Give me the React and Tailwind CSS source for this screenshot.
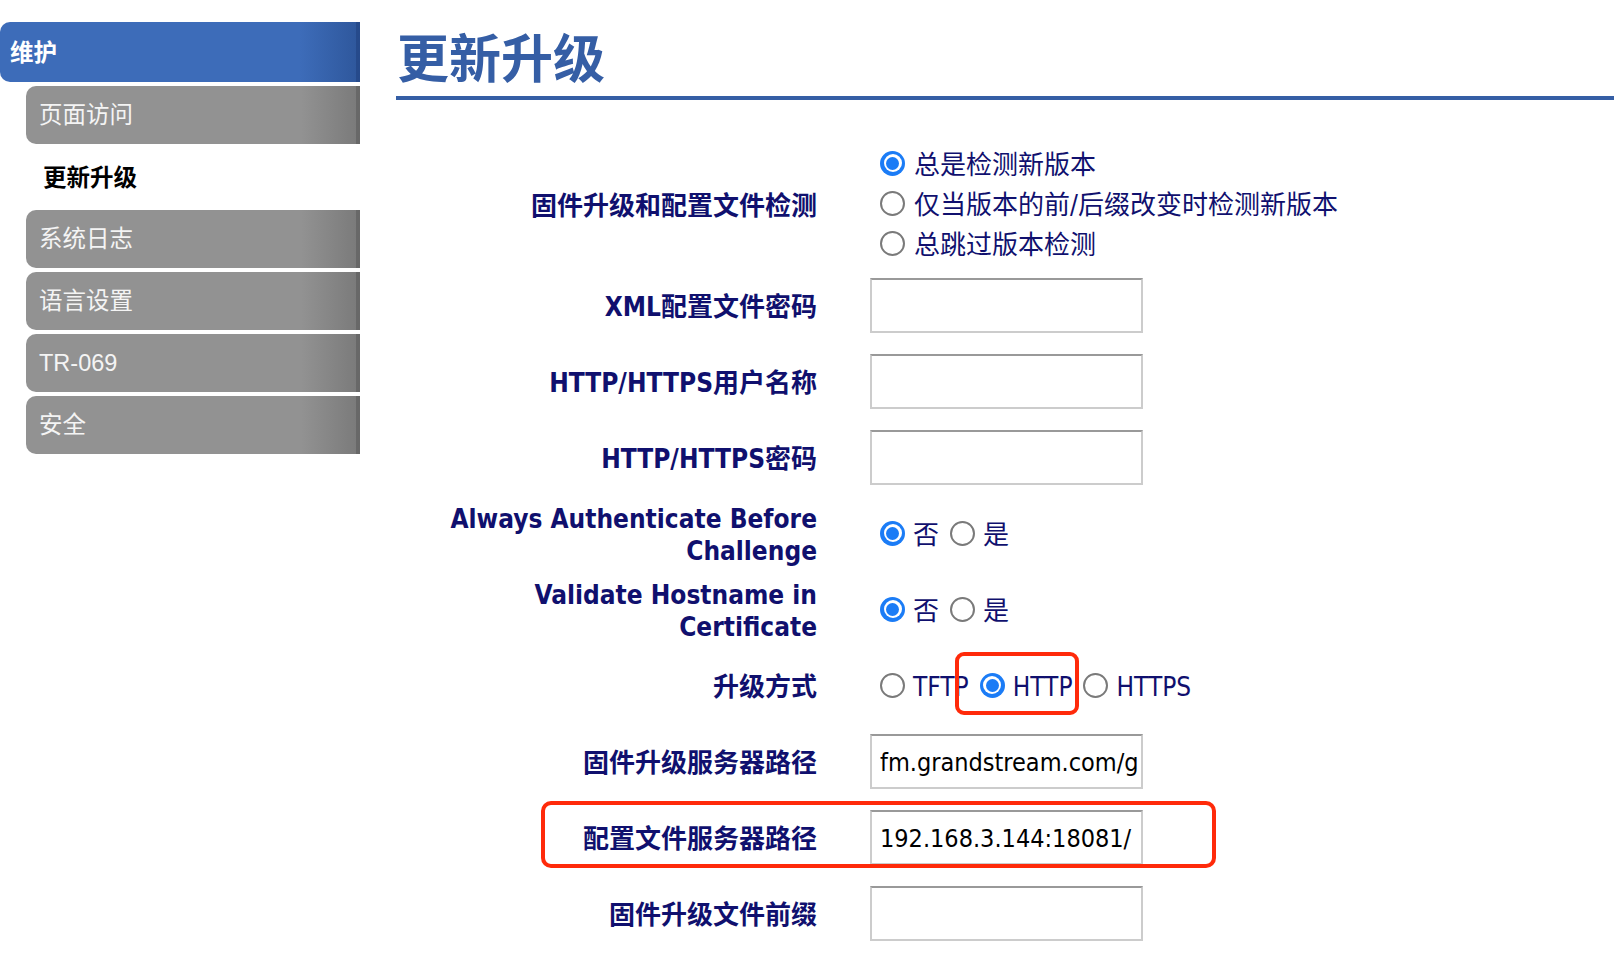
import React from 'react';

const navItems = [
  { label: '页面访问' },
  { label: '更新升级', active: true },
  { label: '系统日志' },
  { label: '语言设置' },
  { label: 'TR-069' },
  { label: '安全' },
];

function Radio({ checked }) {
  if (checked) {
    return (
      <span className="w-[25px] h-[25px] shrink-0 rounded-full bg-[#1b7cf6] flex items-center justify-center">
        <span className="w-[18px] h-[18px] rounded-full bg-white flex items-center justify-center">
          <span className="w-[13px] h-[13px] rounded-full bg-[#1b7cf6]" />
        </span>
      </span>
    );
  }
  return <span className="w-[25px] h-[25px] shrink-0 rounded-full border-2 border-[#7a7a7a] bg-white" />;
}

function Option({ checked, label }) {
  return (
    <span className="flex items-center">
      <Radio checked={checked} />
      <span className="ml-[8px] mr-[11px] pt-[4px]">{label}</span>
    </span>
  );
}

function Label({ children }) {
  return (
    <div className="h-[76px] pt-[3px] flex items-center justify-end text-right font-bold leading-[32px]">
      <span>{children}</span>
    </div>
  );
}

function TextField({ value }) {
  return (
    <div className="h-[76px] flex items-center">
      <input
        readOnly
        defaultValue={value}
        className="w-[273px] h-[55px] border-2 border-[#cccccc] border-t-[#999999] bg-white pl-[8px] pr-[3px] pt-[2px] text-[25px] text-black outline-none"
      />
    </div>
  );
}

function RadioRow({ options }) {
  return (
    <div className="h-[76px] flex items-center pl-[10px]">
      {options.map((o) => (
        <Option key={o.label} checked={o.checked} label={o.label} />
      ))}
    </div>
  );
}

export default function App() {
  return (
    <div className="relative w-[1614px] h-[962px] bg-white flex overflow-hidden font-['DejaVu_Sans_Condensed','DejaVu_Sans','Noto_Sans_CJK_SC',sans-serif]">
      {/* left menu */}
      <aside className="w-[360px] shrink-0 pt-[22px] flex flex-col gap-[4px] font-['Liberation_Sans','Noto_Sans_CJK_SC',sans-serif] text-[23.5px]">
        <div className="h-[60px] rounded-l-[10px] pl-[10px] pt-[3px] flex items-center font-bold text-white bg-[linear-gradient(90deg,#3d6cb9_0px,#3d6cb9_300px,#2f589d_356px,#264a8b_356px)]">
          维护
        </div>
        {navItems.map((item) =>
          item.active ? (
            <div key={item.label} className="ml-[26px] h-[58px] pl-[17px] pt-[3px] flex items-center font-bold text-black">
              {item.label}
            </div>
          ) : (
            <div
              key={item.label}
              className="ml-[26px] h-[58px] pl-[13px] pt-[2px] rounded-l-[10px] flex items-center text-[#f4f4f4] bg-[linear-gradient(90deg,#929292_0px,#929292_275px,#7b7b7b_330px,#686868_330px)]"
            >
              {item.label}
            </div>
          )
        )}
      </aside>

      {/* content */}
      <main className="ml-[36px] flex-1">
        <h1 className="mt-[30px] h-[54px] pl-[1px] text-[52px] leading-[52px] font-bold text-[#355ea5] font-['Noto_Sans_CJK_SC',sans-serif]">
          更新升级
        </h1>
        <div className="mt-[12px] h-[4px] bg-[#355ea5]" />

        <div className="mt-[41px] grid grid-cols-[421px_auto] gap-x-[53px] text-[26px] text-[#10106e]">
          <div className="h-[126px] pt-[4px] flex items-center justify-end font-bold">固件升级和配置文件检测</div>
          <div className="h-[126px] pt-[2px] pl-[10px] flex flex-col">
            {[
              ['总是检测新版本', true],
              ['仅当版本的前/后缀改变时检测新版本', false],
              ['总跳过版本检测', false],
            ].map(([t, c]) => (
              <div key={t} className="h-[40px] flex items-center">
                <Radio checked={c} />
                <span className="ml-[9px] pt-[5px]">{t}</span>
              </div>
            ))}
          </div>

          <Label>XML配置文件密码</Label>
          <TextField value="" />

          <Label>HTTP/HTTPS用户名称</Label>
          <TextField value="" />

          <Label>HTTP/HTTPS密码</Label>
          <TextField value="" />

          <Label>
            Always Authenticate Before
            <br />
            Challenge
          </Label>
          <RadioRow options={[{ label: '否', checked: true }, { label: '是' }]} />

          <Label>
            Validate Hostname in
            <br />
            Certificate
          </Label>
          <RadioRow options={[{ label: '否', checked: true }, { label: '是' }]} />

          <Label>升级方式</Label>
          <RadioRow options={[{ label: 'TFTP' }, { label: 'HTTP', checked: true }, { label: 'HTTPS' }]} />

          <Label>固件升级服务器路径</Label>
          <TextField value="fm.grandstream.com/gs" />

          <Label>配置文件服务器路径</Label>
          <TextField value="192.168.3.144:18081/" />

          <Label>固件升级文件前缀</Label>
          <TextField value="" />
        </div>
      </main>

      {/* annotation boxes */}
      <div className="absolute left-[955px] top-[652px] w-[124px] h-[63px] border-[4px] border-[#ff2a0a] rounded-[9px]" />
      <div className="absolute left-[541px] top-[801px] w-[675px] h-[67px] border-[4px] border-[#ff2a0a] rounded-[10px]" />
    </div>
  );
}
